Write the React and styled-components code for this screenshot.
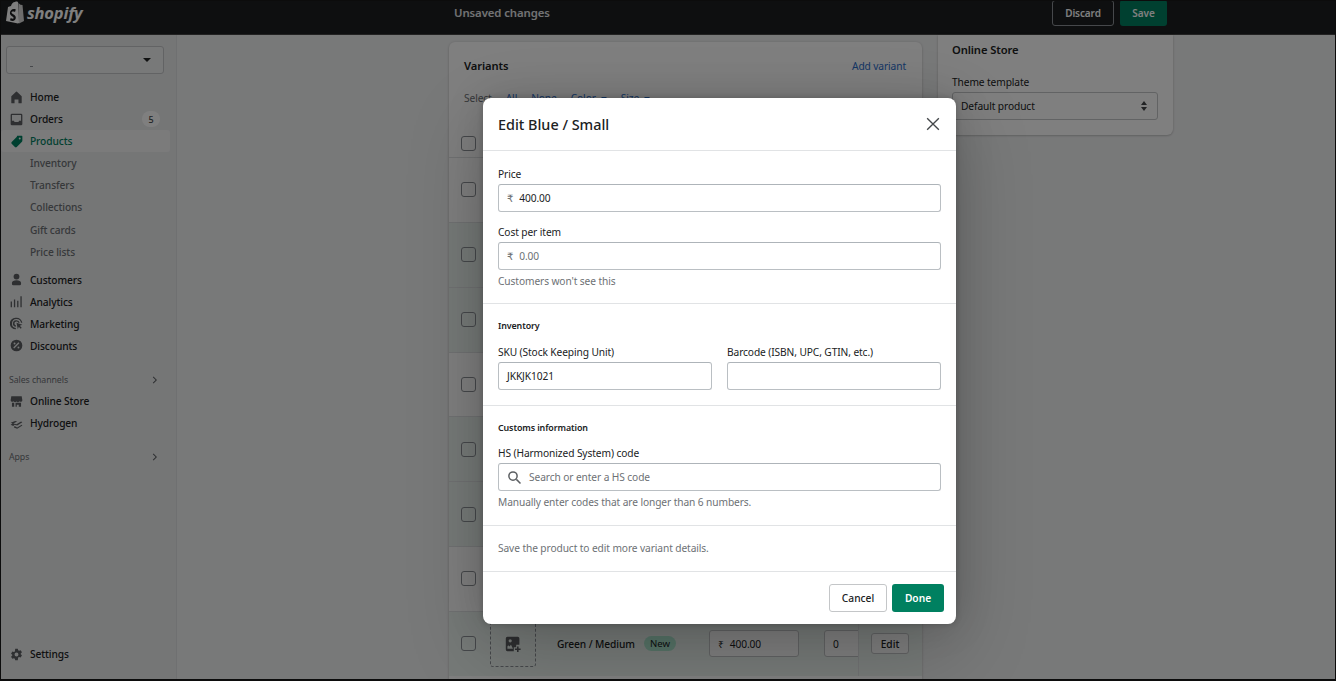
import React from 'react';
import styled, { createGlobalStyle } from 'styled-components';

const Global = createGlobalStyle`
  html, body { margin: 0; padding: 0; height: 100%; overflow: hidden; }
  body { font-family: "Noto Sans", "Open Sans", sans-serif; color: #202223; background: #000; letter-spacing: -.1px; }
  * { box-sizing: border-box; }
`;

const Frame = styled.div`
  position: relative;
  width: 1336px;
  height: 681px;
  border: 1px solid #0c0c0c;
  border-width: 1px 1px 2px 1px;
  background: #f1f2f3;
  overflow: hidden;
  font-size: 10.2px;
`;

const TopBar = styled.header`
  height: 34px;
  padding-bottom: 10px;
  background: #1c1e20;
  display: flex;
  align-items: center;
  border-bottom: 1px solid #444;
`;

const Logo = styled.div`
  width: 453px;
  padding-left: 5px;
  display: flex;
  align-items: center;
  gap: 3px;
  color: #fff;
  span {
    font-family: "Open Sans", sans-serif;
    font-style: italic;
    font-weight: 700;
    font-size: 16.5px;
    letter-spacing: -.2px;
  }
`;

const TopTitle = styled.div`
  flex: 1;
  color: #e3e5e7;
  font-size: 11.4px;
  font-weight: 600;
`;

const TopButton = styled.button`
  height: 26px;
  margin-right: ${p => p.$gap || 0}px;
  padding: 0;
  width: ${p => p.$w}px;
  border-radius: 3px;
  font: 600 10px "Noto Sans", sans-serif;
  letter-spacing: -.1px;
  color: #fff;
  background: ${p => p.$primary ? '#008060' : 'transparent'};
  border: ${p => p.$primary ? 'none' : '1px solid #8c9196'};
`;

const Body = styled.div`
  display: flex;
  height: 644px;
`;

const Side = styled.aside`
  width: 176px;
  flex: none;
  background: #ebeced;
  border-right: 1px solid #dfe1e3;
  padding-top: 11px;
  display: flex;
  flex-direction: column;
`;

const StoreSelect = styled.div`
  margin: 0 12px 0 5px;
  height: 28px;
  border: 1px solid #c4c6c8;
  border-radius: 3px;
  background: #f1f2f3;
  display: flex;
  align-items: center;
  justify-content: flex-end;
  padding-right: 12px;
  position: relative;
  &::before { content: ""; position: absolute; left: 23px; top: 19px; width: 3px; height: 1px; background: #8c9196; }
`;

const Caret = styled.i`
  display: inline-block;
  width: 0;
  height: 0;
  border: ${p => p.$s || 4}px solid transparent;
  border-top-color: ${p => p.$c || '#202223'};
  border-bottom: 0;
`;

const Nav = styled.nav`
  margin-top: 12px;
  display: flex;
  flex-direction: column;
`;

const NavItem = styled.div`
  height: ${p => p.$h || 22}px;
  flex: none;
  display: flex;
  align-items: center;
  margin-right: 6px;
  padding-left: 9px;
  border-radius: 3px;
  font-size: 10.2px;
  font-weight: 500;
  color: ${p => p.$active ? '#008060' : '#202223'};
  background: ${p => p.$active ? '#f6f6f7' : 'transparent'};
  svg { width: 13px; height: 13px; margin-right: 7px; flex: none; color: ${p => p.$active ? '#008060' : '#5c5f62'}; }
`;

const SubItem = styled.div`
  height: 22.2px;
  display: flex;
  align-items: center;
  padding-left: 29px;
  font-size: 10.2px;
  font-weight: 500;
  color: #6d7175;
`;

const NavGap = styled.div`
  height: 6px;
`;

const Badge = styled.span`
  margin-left: auto;
  margin-right: 10px;
  width: 18px;
  height: 16px;
  border-radius: 8px;
  background: #fff;
  color: #44474a;
  font-size: 9px;
  display: flex;
  align-items: center;
  justify-content: center;
`;

const SideHead = styled.div`
  height: 20px;
  margin-top: 13.5px;
  display: flex;
  align-items: center;
  justify-content: space-between;
  padding: 0 16px 0 8px;
  color: #6d7175;
  font-size: 8.8px;
  svg { width: 10px; height: 10px; color: #5c5f62; }
`;

const SettingsItem = styled(NavItem)`
  margin-top: auto;
  margin-bottom: 14px;
`;

const Main = styled.main`
  flex: 1;
  display: flex;
  gap: 16px;
  padding-left: 272px;
  align-items: flex-start;
`;

const Card = styled.section`
  background: #fff;
  border-radius: 6px;
  box-shadow: 0 0 3px rgba(23,24,24,.12), 0 1px 2px rgba(0,0,0,.15);
`;

const Variants = styled(Card)`
  width: 473px;
  margin-top: 7px;
  height: 660px;
  overflow: hidden;
`;

const VarHead = styled.div`
  display: flex;
  justify-content: space-between;
  align-items: center;
  padding: 16px 16px 0 15px;
  font-size: 11.2px;
  font-weight: 600;
  a { color: #2c6ecb; font-size: 10.2px; font-weight: 400; }
`;

const SelectRow = styled.div`
  display: flex;
  gap: 14px;
  padding: 18px 15px 0;
  height: 57px;
  font-size: 10.2px;
  color: #6d7175;
  a { color: #2c6ecb; display: inline-flex; align-items: center; gap: 5px; height: 14px; }
`;

const Row = styled.div`
  height: ${p => p.$h || 64.85}px;
  border-top: ${p => p.$first ? 'none' : '1px solid #e1e3e5'};
  background: ${p => p.$tint ? '#edf5f1' : '#fff'};
  display: flex;
  align-items: center;
  padding-left: 12px;
  position: relative;
`;

const Check = styled.span`
  width: 15px;
  height: 15px;
  border: 1px solid #8c9196;
  border-radius: 3px;
  background: transparent;
  flex: none;
`;

const Dashed = styled.div`
  width: 46px;
  height: 46px;
  margin-left: 14px;
  border: 1px dashed #8c9196;
  border-radius: 3px;
  display: flex;
  align-items: center;
  justify-content: center;
  svg { width: 16px; height: 16px; color: #5c5f62; }
`;

const VarName = styled.div`
  margin-left: 21px;
  width: 87px;
  font-size: 10.2px;
  font-weight: 500;
  white-space: nowrap;
`;

const NewTag = styled.span`
  width: 32px;
  height: 15px;
  border-radius: 8px;
  background: #aee9d1;
  color: #202223;
  font-size: 9.6px;
  display: flex;
  align-items: center;
  justify-content: center;
`;

const MiniInput = styled.div`
  margin-left: ${p => p.$ml}px;
  width: ${p => p.$w}px;
  height: 27px;
  border: 1px solid #c4c6c8;
  border-radius: 3px;
  padding-left: 8px;
  display: flex;
  align-items: center;
  gap: 6px;
  font-size: 10.2px;
  background: #fff;
  flex: none;
`;

const StickyCell = styled.div`
  position: absolute;
  right: 0;
  top: 0;
  bottom: 0;
  width: 64px;
  background: inherit;
  border-left: 1px solid #e1e3e5;
  display: flex;
  align-items: center;
  padding-left: 12px;
`;

const EditBtn = styled.button`
  width: 38px;
  height: 21px;
  padding: 0;
  border: 1px solid #c4c6c8;
  border-radius: 3px;
  background: #fff;
  color: #202223;
  font: 500 10.2px "Noto Sans", sans-serif;
`;

const StoreCard = styled(Card)`
  width: 235px;
  height: 100px;
  padding: 7px 15px 0 14px;
  border-radius: 0 0 6px 6px;
  h3 { margin: 0 0 18px; font-size: 11.2px; font-weight: 600; }
  label { display: block; font-size: 10.2px; margin-bottom: 3px; }
`;

const ThemeSelect = styled.div`
  height: 28px;
  border: 1px solid #c4c6c8;
  border-radius: 3px;
  display: flex;
  align-items: center;
  justify-content: space-between;
  padding: 0 9px 0 8px;
  font-size: 10.2px;
  svg { width: 8px; height: 12px; }
`;

const Backdrop = styled.div`
  position: absolute;
  inset: 0;
  background: rgba(0,0,0,.5);
  display: flex;
  align-items: flex-start;
  padding: 97px 0 0 482px;
`;

const Modal = styled.div`
  width: 473px;
  height: 526px;
  background: #fff;
  border-radius: 8px;
  box-shadow: 0 26px 80px rgba(0,0,0,.2), 0 0 40px rgba(0,0,0,.12), 0 0 6px rgba(0,0,0,.2);
  display: flex;
  flex-direction: column;
`;

const ModalHead = styled.div`
  height: 53px;
  flex: none;
  display: flex;
  align-items: center;
  justify-content: space-between;
  padding: 0 14px 0 15px;
  border-bottom: 1px solid #e1e3e5;
  h2 { margin: 0; font-size: 14.4px; font-weight: 500; color: #202223; letter-spacing: 0; }
  svg { width: 18px; height: 18px; color: #44474a; }
`;

const Section = styled.div`
  height: ${p => p.$h}px;
  flex: none;
  padding: ${p => p.$pt || 15}px 15px 0;
  border-bottom: ${p => p.$last ? 'none' : '1px solid #e1e3e5'};
`;

const Label = styled.div`
  font-size: 10.2px;
  line-height: 15px;
  color: #202223;
  margin-bottom: 2px;
`;

const SubTitle = styled.div`
  font-size: 8.9px;
  font-weight: 600;
  line-height: 14px;
  color: #202223;
  margin-bottom: ${p => p.$mb || 12}px;
`;

const Field = styled.div`
  height: 28px;
  border: 1px solid #babfc3;
  border-top-color: #aeb4b9;
  border-radius: 3px;
  display: flex;
  align-items: center;
  padding-left: 8px;
  gap: ${p => p.$gap || 6}px;
  font-size: 10.2px;
  color: ${p => p.$muted ? '#6d7175' : '#202223'};
  margin-bottom: ${p => p.$mb || 0}px;
  small { font-family: "DejaVu Sans", sans-serif; font-size: 10px; color: #6d7175; }
  svg { width: 15px; height: 15px; color: #5c5f62; }
`;

const Help = styled.div`
  font-size: 10.2px;
  line-height: 15px;
  margin-top: ${p => p.$mt ?? 3}px;
  color: #6d7175;
`;

const TwoCol = styled.div`
  display: grid;
  grid-template-columns: 214px 214px;
  gap: 15px;
`;

const Footer = styled.div`
  flex: 1;
  border-top: 1px solid #e1e3e5;
  display: flex;
  align-items: flex-start;
  justify-content: flex-end;
  gap: 5px;
  padding: 12px 12px 0 0;
`;

const FootBtn = styled.button`
  width: ${p => p.$w}px;
  height: 28px;
  padding: 0;
  border-radius: 3px;
  font: 600 10.2px "Noto Sans", sans-serif;
  color: ${p => p.$primary ? '#fff' : '#202223'};
  background: ${p => p.$primary ? '#008060' : '#fff'};
  border: ${p => p.$primary ? 'none' : '1px solid #c4c6c8'};
  font-weight: ${p => p.$primary ? 600 : 500};
`;

const Ico = ({ d, vb = '0 0 20 20' }) => (
  <svg viewBox={vb} fill="currentColor"><path d={d} fillRule="evenodd" /></svg>
);

const icons = {
  home: 'M18 8 10.7 1.3a1 1 0 0 0-1.4 0L2 8v10a1 1 0 0 0 1 1h4v-6h6v6h4a1 1 0 0 0 1-1z',
  orders: 'M3 1h14a2 2 0 0 1 2 2v14a2 2 0 0 1-2 2H3a2 2 0 0 1-2-2V3a2 2 0 0 1 2-2zm0 2v9h3l1 2h6l1-2h3V3z',
  tag: 'M11 1h7a1 1 0 0 1 1 1v7a2 2 0 0 1-.6 1.4l-8 8a2 2 0 0 1-2.8 0l-5-5a2 2 0 0 1 0-2.8l8-8A2 2 0 0 1 11 1zm4 3a1.5 1.5 0 1 0 0 3 1.5 1.5 0 0 0 0-3z',
  user: 'M10 1a4.500 4.500 0 1 1 0 9 4.500 4.500 0 0 1 0-9zM3 15c0-2.500 3-4 7-4s7 1.500 7 4v2a2 2 0 0 1-2 2H5a2 2 0 0 1-2-2z',
  bars: 'M1 10h2v9H1zM6 7h2v12H6zM11 9h2v10h-2zM16 2h2v17h-2z',
  target: 'M10 1a9 9 0 0 1 9 8h-2a7 7 0 1 0-8 8v2a9 9 0 0 1-.5-18zm0 4a5 5 0 0 1 5 4h-2.200A3 3 0 1 0 9 12.800V15A5 5 0 0 1 10 5zm0 4 9 3-4 1.500 3 3-1.500 1.500-3-3L12 19z',
  discount: 'M10 1a9 9 0 1 1 0 18 9 9 0 0 1 0-18zm3 4-8 8 1.500 1.500 8-8zM7 5.500a1.500 1.500 0 1 0 0 3 1.500 1.500 0 0 0 0-3zm6 6a1.500 1.500 0 1 0 0 3 1.500 1.500 0 0 0 0-3z',
  store: 'M2 2h16l1 6a2.500 2.500 0 0 1-4.500 1.500A3 3 0 0 1 10 10a3 3 0 0 1-4.500-.5A2.500 2.500 0 0 1 1 8zM3 12h3.500v6H3zM8.500 12H17v6h-3.500v-3h-3v3h-2z',
  hydrogen: 'M1 9l7-3 3 1-6 3 5 1 7-4 2 1-8 5-4-1-2 2-4-2 3-2zM7 14l4 2 7-4 1 1-8 5-5-2z',
  gear: 'M8 1h4l.5 2.500 1.500.8 2.400-1 2 3.400-1.900 1.700v1.200l1.900 1.700-2 3.400-2.400-1-1.500.8L12 19H8l-.5-2.500-1.500-.8-2.400 1-2-3.400 1.900-1.700V10.400L1.600 8.700l2-3.400 2.400 1 1.500-.8zM10 7a3 3 0 1 0 0 6 3 3 0 0 0 0-6z',
  image: 'M3 1h13a2 2 0 0 1 2 2v8h-4v3h-3v5H3a2 2 0 0 1-2-2V3a2 2 0 0 1 2-2zm3.500 3a2 2 0 1 0 0 4 2 2 0 0 0 0-4zM3 16h7l-2.500-5-2 2L4 11.500 3 13zM15 13h2v2.500h2.500v2H17V20h-2v-2.500h-2.500v-2H15z',
  chev: 'M7 3l7 7-7 7-1.400-1.400L11.200 10 5.600 4.400z',
};

const Logomark = () => (
  <svg width="18" height="23" viewBox="0 0 18 23">
    <path d="M12.500 2.500 11.800 1C11 .3 10 .5 9 1 7 1 5.500 3 5 5L2 6 0 20l12 2.500 1-.5z" fill="#fff" />
    <path d="M13 2.500l1.500 1.200 2 .3L18 20l-5 2.500z" fill="#d8d8d8" />
    <path d="M9.800 8.500 9 11c-2-1-3.500-.3-3.500.6 0 1.400 4.300 1.900 4.300 5.200 0 2.600-2.700 4-5.800 2.500l.7-2.300c1.500 1 3 1 3 0 0-1.700-3.800-2-3.800-5 0-3 3-5 5.900-3.500z" fill="#1c1e20" />
  </svg>
);

const navA = [
  ['Home', 'home'],
  ['Orders', 'orders', '5'],
];
const subs = ['Inventory', 'Transfers', 'Collections', 'Gift cards', 'Price lists'];
const navB = [
  ['Customers', 'user'],
  ['Analytics', 'bars'],
  ['Marketing', 'target'],
  ['Discounts', 'discount'],
];
const tinted = [false, true, true, false, true, true, false];

export default function App() {
  return (
    <>
      <Global />
      <Frame>
        <TopBar>
          <Logo><Logomark /><span>shopify</span></Logo>
          <TopTitle>Unsaved changes</TopTitle>
          <TopButton $w={62} $gap={6}>Discard</TopButton>
          <TopButton $w={47} $gap={168} $primary>Save</TopButton>
        </TopBar>
        <Body>
          <Side>
            <StoreSelect><Caret /></StoreSelect>
            <Nav>
              {navA.map(([t, i, b]) => (
                <NavItem key={t}><Ico d={icons[i]} />{t}{b && <Badge>{b}</Badge>}</NavItem>
              ))}
              <NavItem $active><Ico d={icons.tag} />Products</NavItem>
              {subs.map(t => <SubItem key={t}>{t}</SubItem>)}
              <NavGap />
              {navB.map(([t, i]) => <NavItem key={t}><Ico d={icons[i]} />{t}</NavItem>)}
              <SideHead>Sales channels<Ico d={icons.chev} /></SideHead>
              <NavItem><Ico d={icons.store} />Online Store</NavItem>
              <NavItem $h={21.5}><Ico d={icons.hydrogen} />Hydrogen</NavItem>
              <SideHead>Apps<Ico d={icons.chev} /></SideHead>
            </Nav>
            <SettingsItem><Ico d={icons.gear} />Settings</SettingsItem>
          </Side>
          <Main>
            <Variants>
              <VarHead>Variants<a>Add variant</a></VarHead>
              <SelectRow>
                Select
                <a>All</a><a>None</a>
                <a>Color <Caret $s={3} $c="#2c6ecb" /></a>
                <a>Size <Caret $s={3} $c="#2c6ecb" /></a>
              </SelectRow>
              <Row $first $h={27}><Check /></Row>
              {tinted.map((t, i) => <Row key={i} $tint={t}><Check /></Row>)}
              <Row $tint>
                <Check />
                <Dashed><Ico d={icons.image} /></Dashed>
                <VarName>Green / Medium</VarName>
                <NewTag>New</NewTag>
                <MiniInput $ml={33} $w={90}><span>₹</span>400.00</MiniInput>
                <MiniInput $ml={25} $w={50}>0</MiniInput>
                <StickyCell><EditBtn>Edit</EditBtn></StickyCell>
              </Row>
            </Variants>
            <StoreCard>
              <h3>Online Store</h3>
              <label>Theme template</label>
              <ThemeSelect>
                Default product
                <svg viewBox="0 0 8 12"><path d="M4 1l3 4H1zM4 11 1 7h6z" fill="#44474a" /></svg>
              </ThemeSelect>
            </StoreCard>
          </Main>
        </Body>
        <Backdrop>
          <Modal>
            <ModalHead>
              <h2>Edit Blue / Small</h2>
              <svg viewBox="0 0 20 20" fill="none" stroke="currentColor" strokeWidth="1.5"><path d="M3.500 3.500l13 13M16.500 3.500l-13 13" /></svg>
            </ModalHead>
            <Section $h={153} $pt={16}>
              <Label>Price</Label>
              <Field $mb={13}><small>₹</small>400.00</Field>
              <Label>Cost per item</Label>
              <Field $muted><small>₹</small>0.00</Field>
              <Help $mt={4}>Customers won't see this</Help>
            </Section>
            <Section $h={102}>
              <SubTitle>Inventory</SubTitle>
              <TwoCol>
                <div><Label>SKU (Stock Keeping Unit)</Label><Field>JKKJK1021</Field></div>
                <div><Label>Barcode (ISBN, UPC, GTIN, etc.)</Label><Field /></div>
              </TwoCol>
            </Section>
            <Section $h={120}>
              <SubTitle $mb={11}>Customs information</SubTitle>
              <Label>HS (Harmonized System) code</Label>
              <Field $muted $gap={7}>
                <svg viewBox="0 0 20 20" fill="none" stroke="currentColor" strokeWidth="2"><circle cx="8" cy="8" r="5.500" /><path d="M12.500 12.500 18 18" /></svg>
                Search or enter a HS code
              </Field>
              <Help $mt={4}>Manually enter codes that are longer than 6 numbers.</Help>
            </Section>
            <Section $h={45} $last><Help $mt={0}>Save the product to edit more variant details.</Help></Section>
            <Footer>
              <FootBtn $w={58}>Cancel</FootBtn>
              <FootBtn $w={52} $primary>Done</FootBtn>
            </Footer>
          </Modal>
        </Backdrop>
      </Frame>
    </>
  );
}
